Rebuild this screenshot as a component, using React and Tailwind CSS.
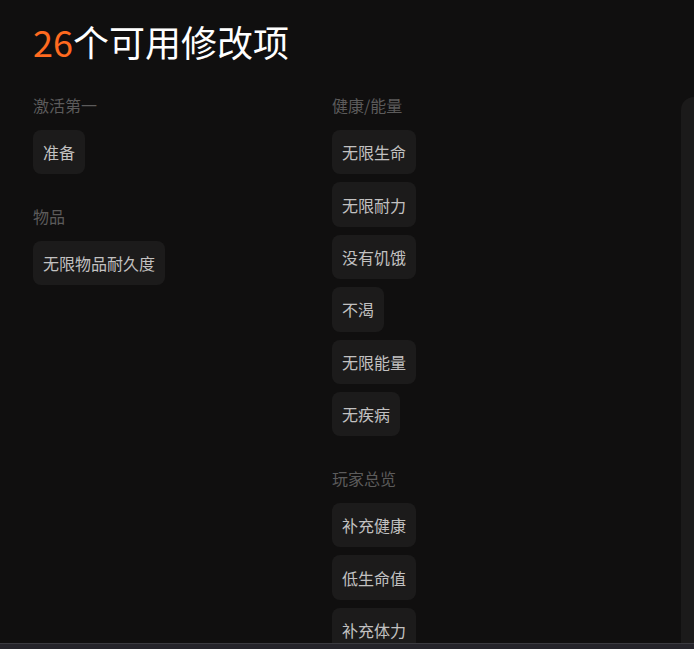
const sections = [
  {
    column: 0,
    title: '激活第一',
    items: ['准备'],
  },
  {
    column: 0,
    title: '物品',
    items: ['无限物品耐久度'],
  },
  {
    column: 1,
    title: '健康/能量',
    items: ['无限生命', '无限耐力', '没有饥饿', '不渴', '无限能量', '无疾病'],
  },
  {
    column: 1,
    title: '玩家总览',
    items: ['补充健康', '低生命值', '补充体力', '补充能量', '补充饮水'],
  },
];

function Section({ section }) {
  return (
    <div className="flex flex-col">
      <div className="text-[16px] leading-[20px] text-[#5c5b5b] mb-[15px] whitespace-nowrap">{section.title}</div>
      <div className="flex flex-col items-start gap-[8px]">
        {section.items.map((item) => (
          <button
            key={item}
            className="h-[44.4px] px-[10px] flex items-center rounded-[8px] bg-[#1c1b1b] text-[16px] text-[#c2c1c1] whitespace-nowrap"
          >
            {item}
          </button>
        ))}
      </div>
    </div>
  );
}

export default function App() {
  const font = { fontFamily: '"Noto Sans CJK SC", "Noto Sans", sans-serif' };

  return (
    <div className="w-[694px] h-[649px] flex flex-col overflow-hidden bg-[#100f0f]" style={font}>
      <div className="flex flex-1 min-h-0">
        <main className="flex-1 min-w-0 overflow-hidden pl-[33px] pt-[19px]">
          <h1 className="text-[36px] leading-[44px] text-white font-normal mb-[32px]">
            <span className="text-[#ff6a1f]">26</span>个可用修改项
          </h1>

          <div className="grid grid-cols-[299px_299px]">
            {[0, 1].map((col) => (
              <div key={col} className="flex flex-col gap-[31.6px]">
                {sections
                  .filter((s) => s.column === col)
                  .map((s) => (
                    <Section key={s.title} section={s} />
                  ))}
              </div>
            ))}
          </div>
        </main>

        {/* side panel, mostly off screen */}
        <aside className="w-[13px] shrink-0 mt-[97px] rounded-tl-[16px] bg-[#1b1a1a]" />
      </div>

      <div className="h-[6px] shrink-0 border-t border-[#3b3b40] bg-[#25242a]" />
    </div>
  );
}
